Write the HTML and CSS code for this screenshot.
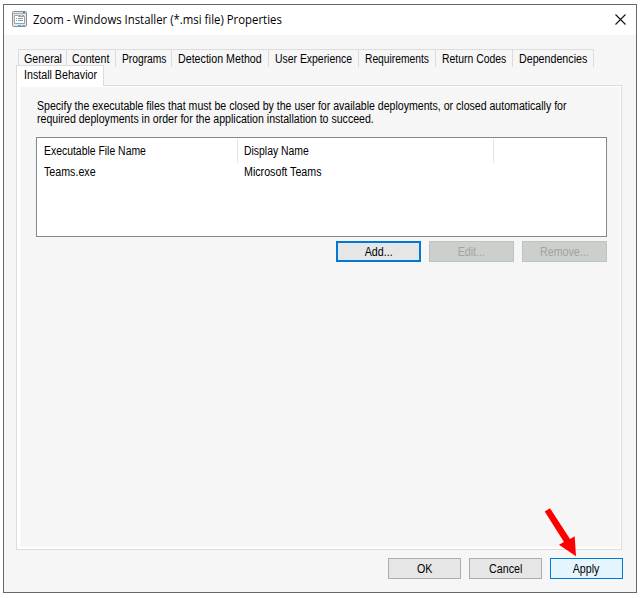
FILE: index.html
```html
<!DOCTYPE html>
<html lang="en">
<head>
<meta charset="utf-8">
<title>Zoom Properties</title>
<link rel="stylesheet" href="styles.css">
</head>
<body>
<div class="window">
  <header class="titlebar">
    <svg class="app-icon" width="15" height="16" viewBox="0 0 15 16">
      <rect x=".5" y=".5" width="14" height="15" rx="1" fill="#e3e7e9" stroke="#899198"/>
      <path d="M1 2.500h13" stroke="#a8b0b5"/>
      <path d="M11 1.500h2" stroke="#59636a"/>
      <path d="M2.500 4.500h4v1h6v7h-10z" fill="#fff" stroke="#9ba3a9"/>
      <path d="M7 4.500h2M10 4.500h2" stroke="#9ba3a9"/>
      <path d="M6 7.500h5M6 9.500h5" stroke="#8c959b"/>
      <path d="M4 7.500h1M4 9.500h1" stroke="#38b6d8"/>
      <path d="M6 14.500h3" stroke="#14c4ee"/>
      <path d="M10 14.500h3" stroke="#9ba3a9"/>
    </svg>
    <h1 class="title">Zoom - Windows Installer (*.msi file) Properties</h1>
    <svg class="close" width="11" height="11" viewBox="0 0 11 11"><path d="M.5.5l10 10M10.500.5l-10 10" stroke="#111" stroke-width="1.100"/></svg>
  </header>
  <nav class="tabs">
    <span class="tab general"><span class="t">General</span></span>
    <span class="tab content"><span class="t">Content</span></span>
    <span class="tab programs"><span class="t tight">Programs</span></span>
    <span class="tab detection"><span class="t">Detection Method</span></span>
    <span class="tab experience"><span class="t snug">User Experience</span></span>
    <span class="tab requirements"><span class="t tight">Requirements</span></span>
    <span class="tab codes"><span class="t snug">Return Codes</span></span>
    <span class="tab dependencies"><span class="t">Dependencies</span></span>
  </nav>
  <div class="tab-active"><span class="t">Install Behavior</span></div>
  <main class="panel">
    <p class="intro"><span class="t body">Specify the executable files that must be closed by the user for available deployments, or closed automatically for</span><br><span class="t body">required deployments in order for the application installation to succeed.</span></p>
    <div class="list">
      <div class="row head"><span class="cell"><span class="t snug">Executable File Name</span></span><span class="cell second"><span class="t snug">Display Name</span></span></div>
      <div class="row"><span class="cell"><span class="t">Teams.exe</span></span><span class="cell second"><span class="t">Microsoft Teams</span></span></div>
    </div>
    <div class="actions">
      <button class="btn add"><span class="t">Add...</span></button>
      <button class="btn" disabled><span class="t">Edit...</span></button>
      <button class="btn" disabled><span class="t">Remove...</span></button>
    </div>
  </main>
  <footer class="footer">
    <button class="btn"><span class="t">OK</span></button>
    <button class="btn"><span class="t">Cancel</span></button>
    <button class="btn apply"><span class="t">Apply</span></button>
  </footer>
  <svg class="arrow" width="34" height="50" viewBox="0 0 34 50"><path d="M.7 3.500L6 .2l20 30.800 4.700-2.700L32 48.300 15 36.700l5-2.700z" fill="#f00"/></svg>
</div>
</body>
</html>
```
FILE: styles.css
```css
* { box-sizing: border-box; }
body {
  margin: 0;
  background: #fff;
  font: 12px/13px "Liberation Sans", sans-serif;
  color: #000;
}
/* condensed interface text */
.t {
  display: inline-block;
  transform: scaleX(.89);
  transform-origin: left;
  white-space: nowrap;
}
.t.body { transform: scaleX(.881); }
.t.snug { transform: scaleX(.868); }
.t.tight { transform: scaleX(.855); }
.window {
  position: relative;
  width: 634px;
  height: 589px;
  margin: 4px 0 0 3px;
  border: 1px solid #666a69;
  background: #f6f6f6;
}
.titlebar {
  display: flex;
  align-items: center;
  height: 30px;
  padding: 0 10px 2px 8px;
  background: #fff;
}
.title {
  margin: 1px auto 0 6px;
  font: 12px/16px "Open Sans", sans-serif;
  white-space: nowrap;
  transform: scaleX(.947);
  transform-origin: left;
}
.tabs {
  display: flex;
  width: 576px;
  height: 16px;
  margin: 14px 0 0 14px;
}
.tab {
  height: 18px;
  padding: 3px 0 0 5px;
  border: solid #dcdcdc;
  border-width: 1px 0 0 1px;
  white-space: nowrap;
}
.general { width: 48px; }
.content { width: 49px; }
.programs { width: 56px; padding-left: 6px; }
.detection { width: 97px; padding-left: 6px; }
.experience { width: 90px; padding-left: 6px; }
.requirements { width: 77px; padding-left: 6px; }
.codes { width: 77px; padding-left: 6px; }
.dependencies { width: 82px; padding-left: 6px; border-right-width: 1px; }
.tab-active {
  position: relative;
  width: 88px;
  height: 21px;
  margin-left: 12px;
  padding: 3px 0 0 7px;
  border: solid #dcdcdc;
  border-width: 1px 1px 0;
  background: #fff;
  white-space: nowrap;
}
.panel {
  width: 606px;
  height: 465px;
  margin: -1px 0 0 12px;
  padding: 14px 12px 0 16px;
  border: 1px solid #dcdcdc;
  box-shadow: inset 3px 1px #fff, inset -1px -2px #fff;
}
.intro {
  margin: 0 0 11px 4px;
  white-space: nowrap;
}
.list {
  width: 571px;
  height: 100px;
  margin-left: 3px;
  padding-top: 1px;
  border: 1px solid #828790;
  background: #fff;
}
.row {
  display: flex;
  line-height: 19px;
}
.head { height: 24px; line-height: 24px; }
.cell { width: 201px; padding-left: 7px; }
.cell.second { width: 256px; padding-left: 6px; }
.head .cell { border-right: 1px solid #e5e5e5; }
.actions {
  display: flex;
  justify-content: flex-end;
  gap: 8px;
  width: 571px;
  margin: 4px 0 0 3px;
}
.btn {
  width: 85px;
  height: 21px;
  padding: 1px 0 0;
  border: 1px solid #adadad;
  background: #e6e6e6;
  color: #000;
  font: inherit;
}
.btn .t { transform-origin: center; }
.btn:disabled {
  border-color: #bfc2bf;
  background: #ccd0cc;
  color: #a0a3a0;
}
.btn.add { border: 2px solid #0078d7; }
.footer {
  display: flex;
  justify-content: flex-end;
  gap: 8px;
  padding: 8px 13px 0 0;
}
.footer .btn { width: 73px; }
.footer .apply { border-color: #0078d7; background: #e5f5fe; }
.arrow { position: absolute; left: 540px; top: 503px; }
```
